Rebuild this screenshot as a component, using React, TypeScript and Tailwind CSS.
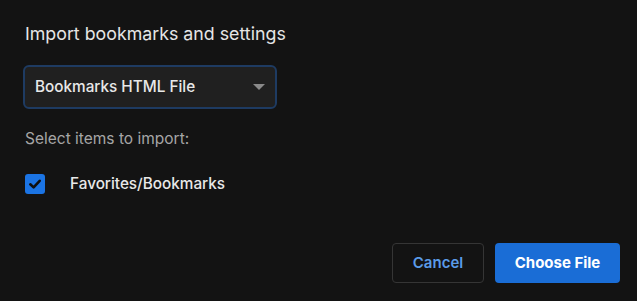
import React from "react";

export default function App() {
  return (
    <div
      className="w-[637px] h-[301px] bg-[#131313] relative overflow-hidden"
      style={{ fontFamily: "Inter, Roboto, sans-serif" }}
    >
      <div className="flex flex-col pl-[25px] pr-[17px] pt-[22px] h-full">
        <div className="text-[17.8px] leading-[24px] text-[#e6e6e6]">Import bookmarks and settings</div>
        <div className="mt-[19px] w-[254px] h-[44px] rounded-[6px] border-2 border-[#1e3b62] bg-[#202020] flex items-center justify-between pl-[10px] pr-[10px] -ml-[2px]">
          <span className="text-[15.3px] font-medium text-[#e8e8e8]">Bookmarks HTML File</span>
          <svg width="12" height="7" viewBox="0 0 12 7">
            <path d="M0 0 L12 0 L6 6 Z" fill="#8a8a8a" />
          </svg>
        </div>
        <div className="mt-[20px] text-[15.5px] leading-[20px] text-[#a6a6a6]">Select items to import:</div>
        <div className="mt-[24px] flex items-center">
          <div className="w-[20px] h-[20px] rounded-[3px] bg-[#1b74e4] flex items-center justify-center">
            <svg width="14" height="14" viewBox="0 0 14 14">
              <path d="M2.3 7.3 L5.6 10.4 L11.7 3.8" stroke="#0f0f0f" strokeWidth="2.6" fill="none" strokeLinecap="round" strokeLinejoin="round" />
            </svg>
          </div>
          <span className="ml-[25px] text-[15.3px] font-medium text-[#e8e8e8]">Favorites/Bookmarks</span>
        </div>
        <div className="mt-auto mb-[18px] flex justify-end gap-[11px]">
          <button className="w-[92px] h-[40px] rounded-[4px] border border-[#353535] bg-transparent text-[15px] font-semibold text-[#5b9be8]">
            Cancel
          </button>
          <button className="w-[125px] h-[40px] rounded-[4px] bg-[#1a6dd6] text-[15px] font-bold text-white">
            Choose File
          </button>
        </div>
      </div>
    </div>
  );
}
